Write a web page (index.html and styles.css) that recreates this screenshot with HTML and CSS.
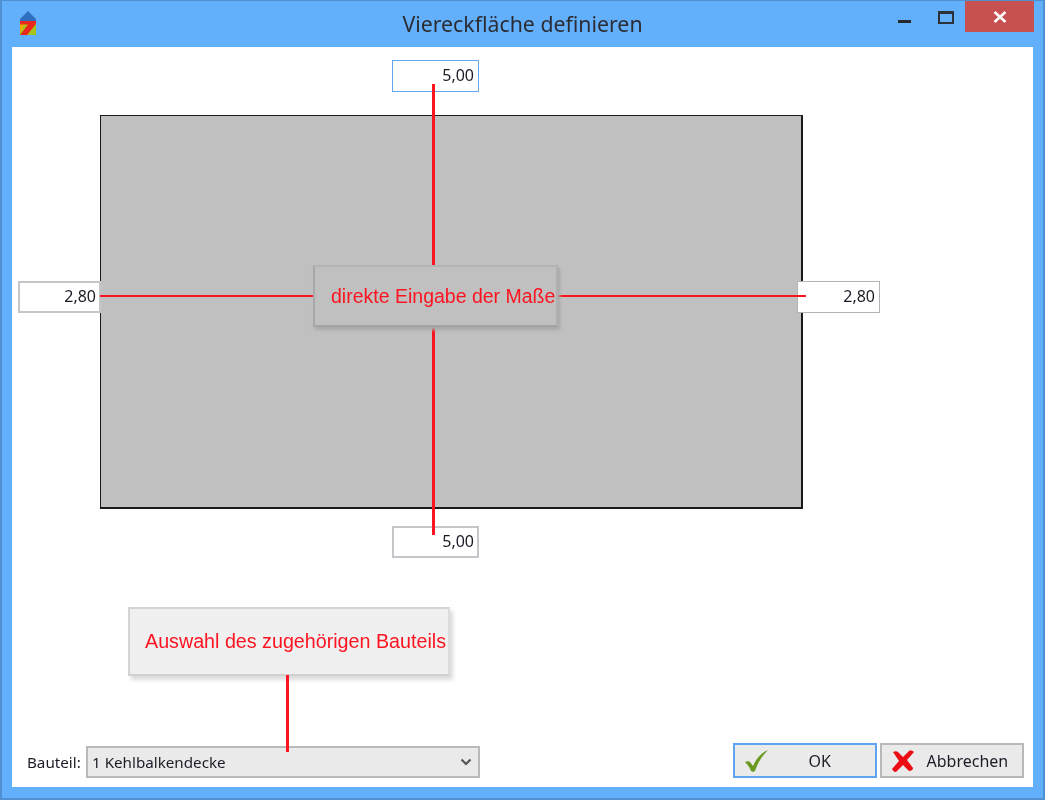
FILE: index.html
```html
<!DOCTYPE html>
<html lang="de">
<head>
<meta charset="utf-8">
<title>Viereckfläche definieren</title>
<link rel="stylesheet" href="styles.css">
</head>
<body>
<div class="window">
  <header class="titlebar">
    <svg class="app-icon" viewBox="0 0 16 24" width="16" height="24">
      <path d="M0 8 8 0l8 8v2H0z" fill="#2f6fc0"/>
      <path d="M0 10h16v14H0z" fill="#a8c41c"/>
      <path d="M0 10h6L0 22z" fill="#f5a800"/>
      <path d="M0 10h16v3L7 24H0l8-10.500H0z" fill="#e8281c"/>
    </svg>
    <h1 class="title">Viereckfläche definieren</h1>
    <div class="controls">
      <span class="ctl ctl-min"><i></i></span>
      <span class="ctl ctl-max"><i></i></span>
      <span class="ctl-close">
        <svg viewBox="0 0 14 12" width="14" height="12"><path d="M1.500 1 12.500 11M12.500 1 1.500 11" stroke="#fff" stroke-width="2.600" fill="none"/></svg>
      </span>
    </div>
  </header>
  <main class="client">
    <div class="canvas">
      <div class="shape"></div>
      <div class="field field-top">5,00</div>
      <div class="field field-bottom">5,00</div>
      <div class="field field-left">2,80</div>
      <div class="field field-right">2,80</div>
      <div class="line line-h line-h1"></div>
      <div class="line line-h line-h2"></div>
      <div class="line line-v line-v1"></div>
      <div class="line line-v line-v2"></div>
      <div class="note note-dim">direkte Eingabe der Maße</div>
      <div class="note note-part">Auswahl des zugehörigen Bauteils</div>
      <div class="line line-part"></div>
    </div>
    <footer class="footer">
      <label class="part-label">Bauteil:</label>
      <div class="select">
        <span>1 Kehlbalkendecke</span>
        <svg viewBox="0 0 12 8" width="12" height="8"><path d="M1.500 1.500 6 6l4.500-4.500" stroke="#555" stroke-width="2.200" fill="none"/></svg>
      </div>
      <div class="buttons">
        <button class="btn btn-ok">
          <svg viewBox="0 0 26 24" width="26" height="24"><path d="M1 13c2-1 4-1 5 0l3 4C12 10 17 4 24 1c-5 5-10 12-13 21-1 1-3 1-4 0-1-3-3-6-6-9z" fill="#6a9a1f"/></svg>
          <span>OK</span>
        </button>
        <button class="btn btn-cancel">
          <svg viewBox="0 0 24 22" width="24" height="22"><path d="M2 2c2-1 4-1 5 0l5 5 6-6c2-1 4 0 5 1l-7 8 6 8c0 2-2 3-4 3l-6-6-7 7c-2 0-3-1-4-3l7-8z" fill="#ec0c14"/></svg>
          <span>Abbrechen</span>
        </button>
      </div>
    </footer>
  </main>
</div>
</body>
</html>
```

FILE: styles.css
```css
* { box-sizing: border-box; }
html, body { margin: 0; height: 100%; overflow: hidden; }
body { font-family: "Noto Sans", "Open Sans", sans-serif; color: #1c1c28; background: #fff; }
.window {
  width: 1045px; height: 800px; display: flex; flex-direction: column;
  background: #62b0fb; border: 1px solid #4f90d0; border-width: 1px 2px 2px 2px;
  padding: 0 10px 11px 10px; filter: blur(0.35px);
}
.titlebar { height: 46px; flex: none; display: flex; align-items: flex-start; position: relative; }
.app-icon { position: absolute; left: 8px; top: 10px; }
.title {
  margin: 0; width: 100%; text-align: center; font-weight: 400; font-size: 21.300px;
  line-height: 24px; padding-top: 11px; color: #2c2c34;
}
.controls { position: absolute; right: -1px; top: 0; display: flex; align-items: flex-start; }
.ctl { width: 40px; height: 31px; position: relative; display: block; }
.ctl-min i { position: absolute; left: 21px; top: 19px; width: 13px; height: 3px; background: #262a30; }
.ctl-max { width: 48px; }
.ctl-max i { position: absolute; left: 21px; top: 10px; width: 16px; height: 13px; border: 2px solid #2c3238; border-top-width: 3px; }
.ctl-close {
  width: 69px; height: 31px; background: #c75050; display: flex; align-items: center; justify-content: center;
}
.client {
  flex: 1; background: #fff; display: flex; flex-direction: column; min-height: 0;
}
.canvas { flex: 1; position: relative; }
.shape {
  position: absolute; left: 88px; top: 68px; width: 703px; height: 394px;
  background: #c0c0c0; border: 2px solid #1a1a1a; border-width: 1.500px 2px 2px 1.500px;
}
.field {
  position: absolute; width: 87px; height: 32px; background: #fff; border: 1px solid #b4b4b8;
  font-size: 16px; line-height: 29px; text-align: right; padding-right: 4px;
}
.field-top { left: 380px; top: 13px; border-color: #63a6ee; }
.field-bottom { left: 380px; top: 479px; border-width: 2px; border-color: #c6c6ca; line-height: 27px; padding-right: 3px; }
.field-left { left: 6px; top: 234px; width: 83px; border-width: 2px; border-color: #c6c6ca; line-height: 27px; padding-right: 3px; }
.field-right { left: 785px; top: 234px; width: 83px; }
.line { position: absolute; background: #fc1420; }
.line-h { top: 247.500px; height: 2.500px; }
.line-h1 { left: 88px; width: 213px; }
.line-h2 { left: 546px; width: 248px; }
.line-v { left: 419.500px; width: 3px; }
.line-v1 { top: 37px; height: 182px; }
.line-v2 { top: 280px; height: 208px; }
.line-part { left: 274px; top: 628px; width: 3px; height: 77px; }
.note {
  position: absolute; color: #fc1420; font-family: "Liberation Sans", sans-serif;
  display: flex; align-items: center; white-space: nowrap;
}
.note-dim {
  left: 301px; top: 218px; width: 245px; height: 62px; padding-left: 16px; background: #c0c0c0; font-size: 19.500px;
  border: 2px solid #b0b0b0; border-color: #b4b4b4 #b0b0b0 #a4a4a4 #a8a8a8;
  box-shadow: 2px 3px 3px #a8a8a8;
}
.note-part {
  left: 116px; top: 560px; width: 322px; height: 69px; padding-left: 15px; padding-bottom: 1px; background: #f0f0f0; font-size: 19.700px;
  border: 2px solid #dcdcdc; border-color: #d4d4d4 #dcdcdc #d0d0d0 #d4d4d4;
  box-shadow: 3px 4px 4px #dcdcdc;
}
.footer {
  height: 41px; flex: none; display: flex; align-items: flex-start; padding: 0 9.500px 0 15px; font-size: 15.200px;
}
.part-label { width: 59px; padding-top: 4px; line-height: 24px; }
.select {
  width: 394px; height: 32px; background: #eaeaea; border: 2px solid #bababa;
  display: flex; align-items: center; justify-content: space-between; padding: 0 6px 0 4px; line-height: 28px;
}
.select svg { flex: none; }
.buttons { margin-left: auto; display: flex; gap: 3px; }
.btn {
  width: 144px; height: 35px; background: #eaeaea; border: 2px solid #b8b8b8; font: inherit; font-size: 16px; color: inherit;
  padding: 0; display: flex; align-items: center; margin-top: -3px;
}
.btn-ok { border-color: #5fa4ee; }
.btn-ok svg { margin-left: 9px; }
.btn-ok span { margin-left: 39px; }
.btn-cancel svg { margin-left: 9px; }
.btn-cancel span { margin-left: 12px; }
```
